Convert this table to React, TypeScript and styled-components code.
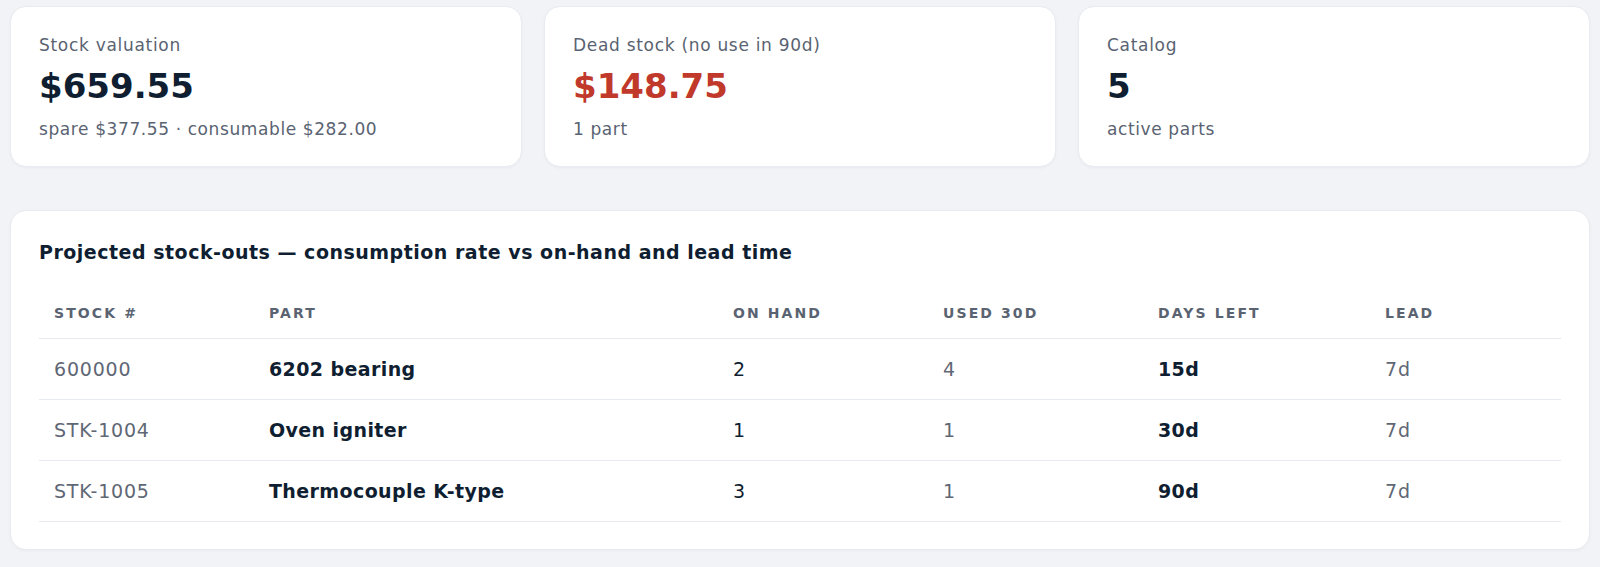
import React from "react";
import styled, { createGlobalStyle } from "styled-components";

const Global = createGlobalStyle`
  html, body { margin: 0; padding: 0; background: #f1f3f7; }
  body { font-family: "DejaVu Sans", "Noto Sans", sans-serif; color: #0f1e30; }
  * { box-sizing: border-box; }
`;

const Page = styled.div`
  padding: 6px 10px 18px 10px;
  display: flex;
  flex-direction: column;
  gap: 43px;
`;

const Cards = styled.div`
  display: grid;
  grid-template-columns: repeat(3, 1fr);
  gap: 22px;
`;

const Card = styled.div`
  background: #ffffff;
  border-radius: 16px;
  border: 1px solid #e8ebf0;
  box-shadow: 0 1px 3px rgba(16, 24, 40, 0.04);
  padding: 26px 28px 24px 28px;
  height: 161px;
  display: flex;
  flex-direction: column;
`;

const Label = styled.div`
  font-size: 17px;
  line-height: 24px;
  letter-spacing: 0.7px;
  color: #5a6371;
`;

const Value = styled.div<{ $tone?: "red" }>`
  font-size: 34px;
  line-height: 44px;
  font-weight: 700;
  margin-top: 7px;
  color: ${(p) => (p.$tone === "red" ? "#c0392b" : "#0f1e30")};
`;

const Sub = styled.div`
  font-size: 17px;
  line-height: 24px;
  letter-spacing: 0.6px;
  color: #5a6371;
  margin-top: 9px;
`;

const Panel = styled.div`
  background: #ffffff;
  border-radius: 16px;
  border: 1px solid #e8ebf0;
  box-shadow: 0 1px 3px rgba(16, 24, 40, 0.04);
  padding: 28px 28px 27px 28px;
`;

const Title = styled.h2`
  margin: 0;
  font-size: 19px;
  line-height: 26px;
  font-weight: 700;
  letter-spacing: 0.5px;
  color: #0f1e30;
`;

const Table = styled.table`
  width: 100%;
  margin-top: 20px;
  border-collapse: collapse;
  table-layout: fixed;
`;

const Col = styled.col<{ $w: number }>`
  width: ${(p) => p.$w}px;
`;

const Th = styled.th`
  text-align: left;
  padding: 18px 15px 15px 15px;
  font-size: 14px;
  line-height: 20px;
  font-weight: 700;
  letter-spacing: 2.1px;
  text-transform: uppercase;
  color: #5a6371;
  border-bottom: 1px solid #e6eaee;
`;

type Tone = "muted" | "strong" | "plain";

const Td = styled.td<{ $tone: Tone }>`
  padding: 20px 15px 20px 15px;
  font-size: 19px;
  line-height: 20px;
  border-bottom: 1px solid #e6eaee;
  font-weight: ${(p) => (p.$tone === "strong" ? 700 : 400)};
  letter-spacing: ${(p) => (p.$tone === "strong" ? "0.4px" : "0.8px")};
  color: ${(p) => (p.$tone === "muted" ? "#5f6775" : "#0f1e30")};
`;

const cards = [
  { label: "Stock valuation", value: "$659.55", sub: "spare $377.55 · consumable $282.00" },
  { label: "Dead stock (no use in 90d)", value: "$148.75", sub: "1 part", tone: "red" as const },
  { label: "Catalog", value: "5", sub: "active parts" },
];

const rows = [
  { stock: "600000", part: "6202 bearing", onHand: "2", used: "4", days: "15d", lead: "7d" },
  { stock: "STK-1004", part: "Oven igniter", onHand: "1", used: "1", days: "30d", lead: "7d" },
  { stock: "STK-1005", part: "Thermocouple K-type", onHand: "3", used: "1", days: "90d", lead: "7d" },
];

const widths = [215, 464, 210, 215, 227, 191];

export default function App() {
  return (
    <>
      <Global />
      <Page>
        <Cards>
          {cards.map((c) => (
            <Card key={c.label}>
              <Label>{c.label}</Label>
              <Value $tone={c.tone}>{c.value}</Value>
              <Sub>{c.sub}</Sub>
            </Card>
          ))}
        </Cards>
        <Panel>
          <Title>Projected stock-outs — consumption rate vs on-hand and lead time</Title>
          <Table>
            <colgroup>
              {widths.map((w, i) => (
                <Col key={i} $w={w} />
              ))}
            </colgroup>
            <thead>
              <tr>
                <Th>Stock #</Th>
                <Th>Part</Th>
                <Th>On hand</Th>
                <Th>Used 30d</Th>
                <Th>Days left</Th>
                <Th>Lead</Th>
              </tr>
            </thead>
            <tbody>
              {rows.map((r) => (
                <tr key={r.stock}>
                  <Td $tone="muted">{r.stock}</Td>
                  <Td $tone="strong">{r.part}</Td>
                  <Td $tone="plain">{r.onHand}</Td>
                  <Td $tone="muted">{r.used}</Td>
                  <Td $tone="strong">{r.days}</Td>
                  <Td $tone="muted">{r.lead}</Td>
                </tr>
              ))}
            </tbody>
          </Table>
        </Panel>
      </Page>
    </>
  );
}
